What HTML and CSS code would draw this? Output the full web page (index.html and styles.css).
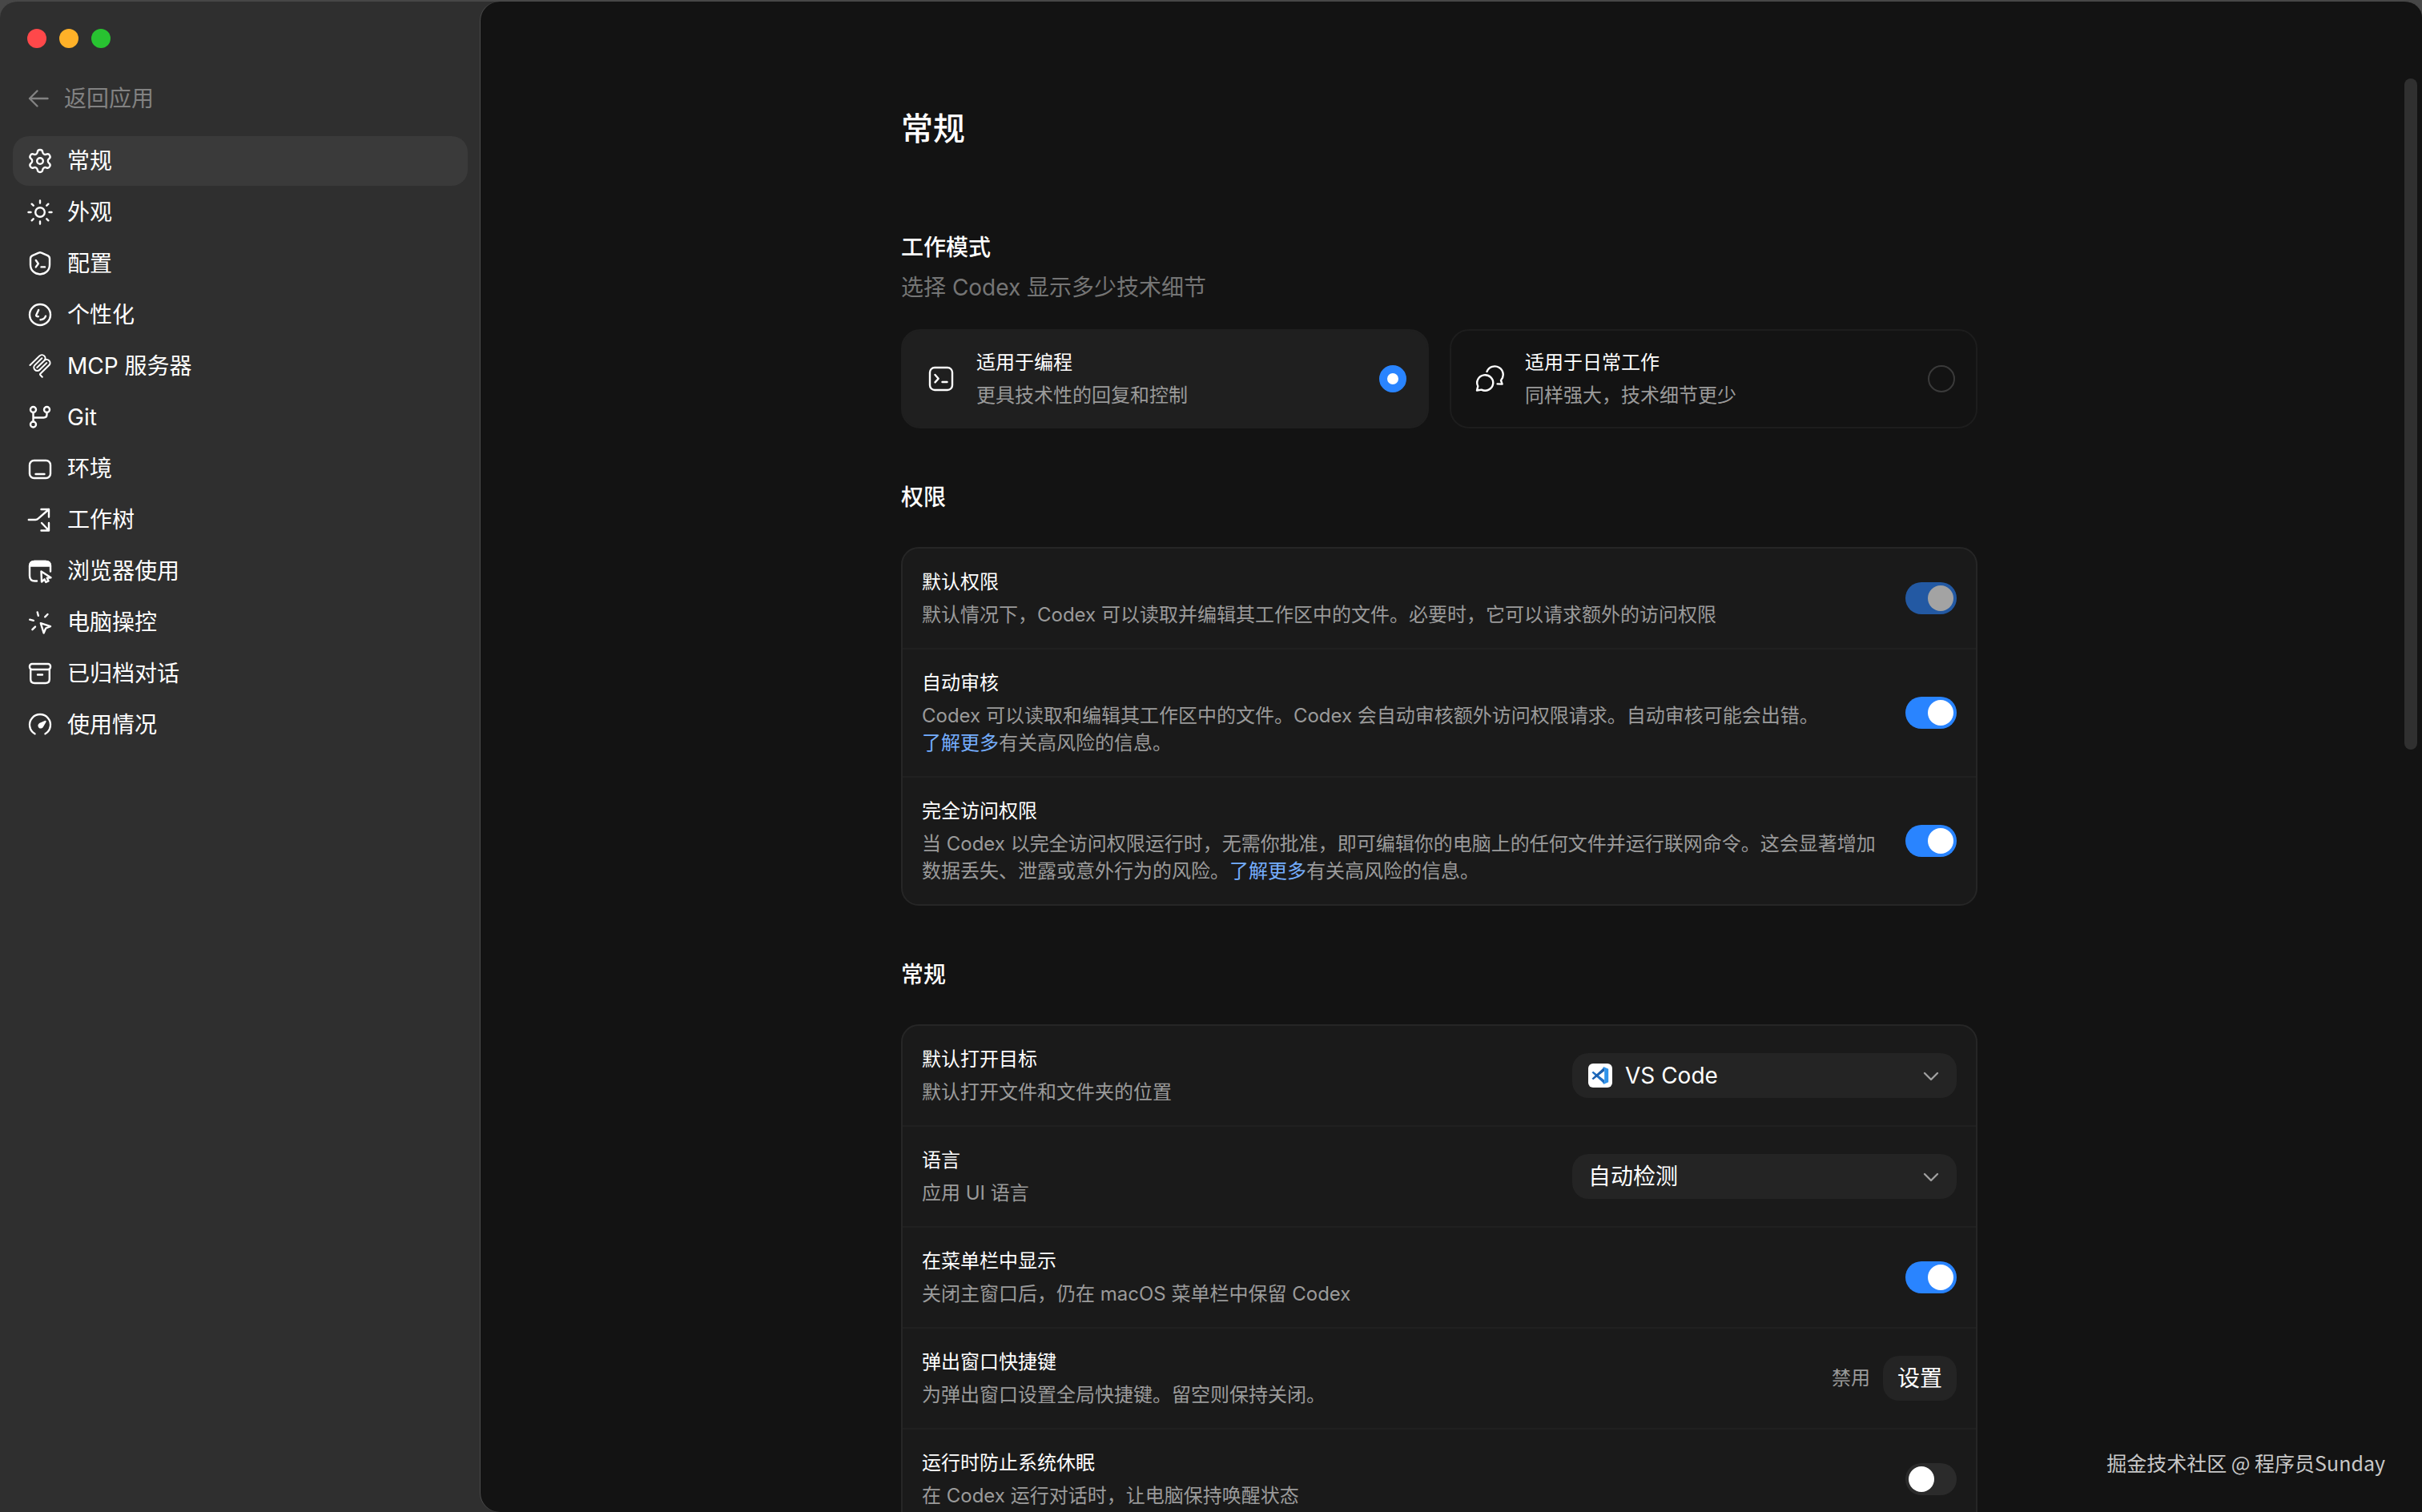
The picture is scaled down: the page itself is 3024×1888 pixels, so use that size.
FILE: index.html
```html
<!DOCTYPE html>
<html lang="zh-CN">
<head>
    <meta charset="UTF-8">
    <meta name="viewport" content="width=device-width, initial-scale=1.0">
    <title>常规</title>
    <link rel="stylesheet" href="styles.css">
</head>
<body>
    <div class="window">
        <aside class="sidebar">
            <div class="traffic">
                <span class="dot dot-close"></span>
                <span class="dot dot-min"></span>
                <span class="dot dot-max"></span>
            </div>
            <a class="back" href="#">
                <svg class="icon-back" viewBox="0 0 28 28"><path d="M25.500 14H3M12.500 4.500L3 14l9.500 9.500"/></svg>
                <span>返回应用</span>
            </a>
            <nav class="nav">
                <a class="nav-item active" href="#">
                    <svg class="icon" viewBox="0 0 32 32"><g transform="translate(16 16) scale(1.400) translate(-12 -12)"><path stroke-width="1.700" d="M9.671 4.136a2.34 2.34 0 0 1 4.659 0 2.34 2.34 0 0 0 3.319 1.915 2.34 2.34 0 0 1 2.33 4.033 2.34 2.34 0 0 0 0 3.831 2.34 2.34 0 0 1-2.33 4.033 2.34 2.34 0 0 0-3.319 1.915 2.34 2.34 0 0 1-4.659 0 2.34 2.34 0 0 0-3.32-1.915 2.34 2.34 0 0 1-2.33-4.033 2.34 2.34 0 0 0 0-3.831A2.34 2.34 0 0 1 6.35 6.051a2.34 2.34 0 0 0 3.319-1.915"/></g><circle cx="16" cy="16" r="3.800"/></svg>
                    <span>常规</span>
                </a>
                <a class="nav-item" href="#">
                    <svg class="icon" viewBox="0 0 32 32"><circle cx="16" cy="16" r="5.800"/><path d="M16 1.500v3M16 27.500v3M1.500 16h3M27.500 16h3M5.700 5.700l2 2M24.300 24.300l2 2M5.700 26.300l2-2M24.300 7.700l2-2"/></svg>
                    <span>外观</span>
                </a>
                <a class="nav-item" href="#">
                    <svg class="icon" viewBox="0 0 32 32"><path d="M14.400 2.700q1.600-.8 3.200 0l8 3.400Q28 7.300 28 10v7.500C28 24.800 22.500 29.500 16 29.500S4 24.800 4 17.500V10q0-2.700 2.400-3.900z"/><path d="M10.800 12l3 4.200-3 4.200M17.500 20.400h4.500"/></svg>
                    <span>配置</span>
                </a>
                <a class="nav-item" href="#">
                    <svg class="icon" viewBox="0 0 32 32"><circle cx="16" cy="16" r="13"/><path d="M14.200 10l-3 6.600q-.4 1.400 2.600 1.600M16.500 22.300q5 0 6.500-4.600"/></svg>
                    <span>个性化</span>
                </a>
                <a class="nav-item" href="#">
                    <svg class="icon icon-solid" viewBox="-1 -1 26 26"><path d="M15.688 2.343a2.588 2.588 0 00-3.61 0l-9.626 9.44a.863.863 0 01-1.203 0 .823.823 0 010-1.18l9.626-9.44a4.313 4.313 0 016.016 0 4.116 4.116 0 011.204 3.54 4.3 4.3 0 013.609 1.18l.05.05a4.115 4.115 0 010 5.9l-8.706 8.537a.274.274 0 000 .393l1.788 1.754a.823.823 0 010 1.18.863.863 0 01-1.203 0l-1.788-1.753a1.92 1.92 0 010-2.754l8.706-8.538a2.47 2.47 0 000-3.54l-.05-.049a2.588 2.588 0 00-3.607-.003l-7.172 7.034-.002.002-.098.097a.863.863 0 01-1.204 0 .823.823 0 010-1.18l7.273-7.133a2.47 2.47 0 00-.003-3.537z"/><path d="M14.485 4.703a.823.823 0 000-1.18.863.863 0 00-1.204 0l-7.119 6.982a4.115 4.115 0 000 5.9 4.314 4.314 0 006.016 0l7.12-6.982a.823.823 0 000-1.180.863.863 0 00-1.204 0l-7.119 6.982a2.588 2.588 0 01-3.610 0 2.470 2.470 0 010-3.540l7.120-6.982z"/></svg>
                    <span>MCP 服务器</span>
                </a>
                <a class="nav-item" href="#">
                    <svg class="icon" viewBox="0 0 32 32"><circle cx="7.500" cy="6.500" r="3.500"/><circle cx="24.500" cy="6.500" r="3.500"/><circle cx="7.500" cy="25" r="3.500"/><path d="M7.500 10v11.500M24.500 10v2.500q0 4-4 4h-13"/></svg>
                    <span>Git</span>
                </a>
                <a class="nav-item" href="#">
                    <svg class="icon" viewBox="0 0 32 32"><rect x="3" y="6" width="26" height="22" rx="5.500"/><path d="M10.500 23h11"/></svg>
                    <span>环境</span>
                </a>
                <a class="nav-item" href="#">
                    <svg class="icon" viewBox="0 0 32 32"><path d="M1.800 16h8.500q2 0 3.300-1.300L27 3M17.500 3H27v9.500M18 20l9 9.500M17.500 29.500H27V20"/></svg>
                    <span>工作树</span>
                </a>
                <a class="nav-item" href="#">
                    <svg class="icon" viewBox="0 0 32 32"><path d="M12 28.500H9.500Q3 28.500 3 22V10q0-6 6-6h14q6 0 6 6v6.500"/><path class="fill" d="M3 9.500Q3.500 4 9 4h14q5.500 0 6 5.500z"/><path d="M17.500 16.500l.5 13 3.500-3.200 1.800 3.700 3.200-1.500-1.800-3.700 4.800-.6z"/></svg>
                    <span>浏览器使用</span>
                </a>
                <a class="nav-item" href="#">
                    <svg class="icon" viewBox="0 0 32 32"><path d="M12.700 3.500l1.100 4.300M25.500 6l-3.300 3.300M3.200 12.700l4.600 1.200M6.400 25.200l3.600-3.600M16.800 17.200l12.200 4-5.800 2.300-2.600 6z"/></svg>
                    <span>电脑操控</span>
                </a>
                <a class="nav-item" href="#">
                    <svg class="icon" viewBox="0 0 32 32"><rect x="3" y="4" width="26" height="7" rx="3"/><path d="M4.200 11v12q0 5 5 5h13.600q5 0 5-5V11M13 17.500h6"/></svg>
                    <span>已归档对话</span>
                </a>
                <a class="nav-item" href="#">
                    <svg class="icon" viewBox="0 0 32 32"><path d="M9.500 27.300a13 13 0 1 1 13 0"/><path class="fill" d="M22.500 12l-3.600 6.200a2.300 2.300 0 1 1-3.300-3z"/></svg>
                    <span>使用情况</span>
                </a>
            </nav>
        </aside>

        <main class="main">
            <div class="content">
                <h1 class="page-title">常规</h1>

                <section class="section">
                    <h2 class="section-title">工作模式</h2>
                    <p class="section-desc">选择 Codex 显示多少技术细节</p>
                    <div class="modes">
                        <label class="mode selected">
                            <svg class="icon-mode" viewBox="0 0 36 36"><rect x="4" y="4" width="28" height="28" rx="6"/><path d="M10.500 13l4.200 4.700-4.200 4.700M19.500 22h6"/></svg>
                            <span class="mode-text">
                                <span class="row-title">适用于编程</span>
                                <span class="row-desc">更具技术性的回复和控制</span>
                            </span>
                            <input class="radio" type="radio" name="mode" checked>
                        </label>
                        <label class="mode">
                            <svg class="icon-mode" viewBox="0 0 36 36"><path d="M2 32.500l1.300-5.200a10 9.700 0 1 1 4.400 4.300z"/><path d="M14.500 9a10.500 10.500 0 1 1 17.500 11l1.600 4.600-6-.2"/></svg>
                            <span class="mode-text">
                                <span class="row-title">适用于日常工作</span>
                                <span class="row-desc">同样强大，技术细节更少</span>
                            </span>
                            <input class="radio" type="radio" name="mode">
                        </label>
                    </div>
                </section>

                <section class="section">
                    <h2 class="section-title">权限</h2>
                    <div class="panel">
                        <div class="row">
                            <div class="row-text">
                                <label class="row-title" for="perm-default">默认权限</label>
                                <p class="row-desc">默认情况下，Codex 可以读取并编辑其工作区中的文件。必要时，它可以请求额外的访问权限</p>
                            </div>
                            <input class="toggle" type="checkbox" id="perm-default" checked disabled>
                        </div>
                        <div class="row">
                            <div class="row-text">
                                <label class="row-title" for="perm-review">自动审核</label>
                                <p class="row-desc">Codex 可以读取和编辑其工作区中的文件。Codex 会自动审核额外访问权限请求。自动审核可能会出错。<br><a class="link" href="#">了解更多</a>有关高风险的信息。</p>
                            </div>
                            <input class="toggle" type="checkbox" id="perm-review" checked>
                        </div>
                        <div class="row">
                            <div class="row-text">
                                <label class="row-title" for="perm-full">完全访问权限</label>
                                <p class="row-desc">当 Codex 以完全访问权限运行时，无需你批准，即可编辑你的电脑上的任何文件并运行联网命令。这会显著增加数据丢失、泄露或意外行为的风险。<a class="link" href="#">了解更多</a>有关高风险的信息。</p>
                            </div>
                            <input class="toggle" type="checkbox" id="perm-full" checked>
                        </div>
                    </div>
                </section>

                <section class="section">
                    <h2 class="section-title">常规</h2>
                    <div class="panel">
                        <div class="row">
                            <div class="row-text">
                                <label class="row-title" for="open-target">默认打开目标</label>
                                <p class="row-desc">默认打开文件和文件夹的位置</p>
                            </div>
                            <div class="select-wrap">
                                <svg class="icon-app" viewBox="0 0 30 30">
                                    <rect width="30" height="30" rx="6" fill="#fff"/>
                                    <path d="M4.500 11.200l1.700-1.400L20 20.500v5z" fill="#1f6fc4"/>
                                    <path d="M4.500 18.800l1.700 1.400L20 9.500v-5z" fill="#1b5fae"/>
                                    <path d="M19.500 4.300l5.700 2.500v16.400l-5.700 2.500-1.500-1.200 2.200-1V7.500l-2.200-2z" fill="#2f93ea"/>
                                </svg>
                                <select class="select has-icon" id="open-target">
                                    <option>VS Code</option>
                                </select>
                                <svg class="chevron" viewBox="0 0 20 12"><path d="M2 2l8 8 8-8"/></svg>
                            </div>
                        </div>
                        <div class="row">
                            <div class="row-text">
                                <label class="row-title" for="language">语言</label>
                                <p class="row-desc">应用 UI 语言</p>
                            </div>
                            <div class="select-wrap">
                                <select class="select" id="language">
                                    <option>自动检测</option>
                                </select>
                                <svg class="chevron" viewBox="0 0 20 12"><path d="M2 2l8 8 8-8"/></svg>
                            </div>
                        </div>
                        <div class="row">
                            <div class="row-text">
                                <label class="row-title" for="menubar">在菜单栏中显示</label>
                                <p class="row-desc">关闭主窗口后，仍在 macOS 菜单栏中保留 Codex</p>
                            </div>
                            <input class="toggle" type="checkbox" id="menubar" checked>
                        </div>
                        <div class="row">
                            <div class="row-text">
                                <label class="row-title" for="hotkey">弹出窗口快捷键</label>
                                <p class="row-desc">为弹出窗口设置全局快捷键。留空则保持关闭。</p>
                            </div>
                            <div class="row-actions">
                                <span class="row-desc">禁用</span>
                                <button class="btn" id="hotkey" type="button">设置</button>
                            </div>
                        </div>
                        <div class="row">
                            <div class="row-text">
                                <label class="row-title" for="no-sleep">运行时防止系统休眠</label>
                                <p class="row-desc">在 Codex 运行对话时，让电脑保持唤醒状态</p>
                            </div>
                            <input class="toggle" type="checkbox" id="no-sleep">
                        </div>
                    </div>
                </section>
            </div>
            <div class="scrollbar"></div>
            <div class="watermark">掘金技术社区 @ 程序员Sunday</div>
        </main>
    </div>
</body>
</html>
```
FILE: styles.css
```css
* {
    box-sizing: border-box;
}
body {
    margin: 0;
    height: 100vh;
    overflow: hidden;
    background: #474747;
    color: #fff;
    font-family: Inter, "Noto Sans CJK SC", sans-serif;
    font-size: 28px;
    line-height: 40px;
}
h1, h2, p {
    margin: 0;
}
a {
    color: inherit;
    text-decoration: none;
}
svg {
    flex: none;
    fill: none;
    stroke: currentColor;
    stroke-width: 2.4;
    stroke-linecap: round;
    stroke-linejoin: round;
}
.window {
    display: flex;
    height: 100vh;
    overflow: hidden;
    background: #2f2f2f;
    border-top: 2px solid #474747;
    border-radius: 22px 22px 0 0;
}

/* sidebar */
.sidebar {
    flex: none;
    width: 600px;
    padding: 34px 16px;
}
.traffic {
    display: flex;
    gap: 16px;
    padding-left: 18px;
}
.dot {
    width: 24px;
    height: 24px;
    border-radius: 50%;
}
.dot-close {
    background: #ff484a;
}
.dot-min {
    background: #ffb128;
}
.dot-max {
    background: #28c331;
}
.back {
    display: flex;
    align-items: center;
    gap: 18px;
    margin: 43px 0 27px;
    padding-left: 18px;
    color: #828282;
}
.icon-back {
    width: 28px;
    height: 28px;
}
.nav {
    display: flex;
    flex-direction: column;
    gap: 2px;
}
.nav-item {
    display: flex;
    align-items: center;
    gap: 18px;
    height: 62px;
    padding: 0 18px;
    border-radius: 20px;
}
.nav-item.active {
    background: #3a3a3a;
}
.icon {
    width: 32px;
    height: 32px;
}
.icon-solid {
    fill: currentColor;
    stroke: none;
}
.fill {
    fill: currentColor;
}

/* main */
.main {
    position: relative;
    flex: 1;
    min-width: 0;
    padding: 131px 30px 0 0;
    overflow: hidden;
    background: #131313;
    border-radius: 24px 0 0 24px;
    box-shadow: -1px 0 0 #4a4a4a;
}
.content {
    width: 100%;
    max-width: 1344px;
    margin: 0 auto;
}
.page-title {
    margin-bottom: 100px;
    font-size: 40px;
    font-weight: 500;
    line-height: 56px;
}
.section {
    margin-bottom: 66px;
}
.section-title {
    font-size: 28px;
    font-weight: 500;
}
.section-desc {
    margin-top: 10px;
    color: #757575;
}
.modes {
    display: grid;
    grid-template-columns: 1fr 1fr;
    gap: 26px;
    margin-top: 32px;
}
.mode {
    display: flex;
    align-items: center;
    gap: 26px;
    padding: 22px 26px 22px 30px;
    border: 2px solid #1d1d1d;
    border-radius: 24px;
}
.mode.selected {
    background: #1f1f1f;
    border-color: #1f1f1f;
}
.icon-mode {
    width: 36px;
    height: 36px;
}
.mode-text {
    flex: 1;
}
.radio {
    appearance: none;
    width: 34px;
    height: 34px;
    margin: 0;
    border: 2px solid #3a3a3a;
    border-radius: 50%;
}
.radio:checked {
    border: 10px solid #2984ff;
    background: #fff;
}
.panel {
    margin-top: 42px;
    border: 2px solid #262626;
    border-radius: 22px;
    background: #1a1a1a;
}
.row {
    display: flex;
    align-items: center;
    justify-content: space-between;
    gap: 24px;
    padding: 24px;
}
.row + .row {
    border-top: 2px solid #202020;
}
.row-title {
    display: block;
    margin-bottom: 6px;
    font-size: 24px;
    line-height: 36px;
}
.row-desc {
    display: block;
    color: #9a9a9a;
    font-size: 24px;
    line-height: 34px;
}
.link {
    color: #75aeff;
}
.row-actions {
    display: flex;
    align-items: center;
    gap: 16px;
}

/* controls */
.toggle {
    appearance: none;
    flex: none;
    width: 64px;
    height: 40px;
    margin: 0;
    padding: 4px;
    border-radius: 20px;
    background: #2b2b2b;
}
.toggle::before {
    content: "";
    display: block;
    width: 32px;
    height: 32px;
    border-radius: 50%;
    background: #fff;
}
.toggle:checked {
    background: #2984ff;
}
.toggle:checked::before {
    margin-left: auto;
}
.toggle:disabled {
    opacity: 0.6;
}
.select-wrap {
    position: relative;
    width: 480px;
}
.select {
    appearance: none;
    display: block;
    width: 100%;
    height: 56px;
    padding: 0 60px 0 20px;
    border: none;
    border-radius: 20px;
    background: #242424;
    color: #fff;
    font: inherit;
}
.select.has-icon {
    padding-left: 66px;
}
.icon-app {
    position: absolute;
    top: 13px;
    left: 20px;
    width: 30px;
    height: 30px;
    stroke: none;
}
.chevron {
    position: absolute;
    top: 23px;
    right: 22px;
    width: 20px;
    height: 12px;
    color: #a0a0a0;
}
.btn {
    height: 56px;
    padding: 0 18px;
    border: none;
    border-radius: 20px;
    background: #242424;
    color: #fff;
    font: inherit;
}

/* overlays */
.scrollbar {
    position: absolute;
    top: 96px;
    right: 6px;
    width: 16px;
    height: 838px;
    border-radius: 8px;
    background: #303030;
}
.watermark {
    position: absolute;
    right: 46px;
    bottom: 42px;
    color: #c8c8c8;
    font-family: "Noto Sans CJK SC", sans-serif;
    font-size: 25px;
}
```
